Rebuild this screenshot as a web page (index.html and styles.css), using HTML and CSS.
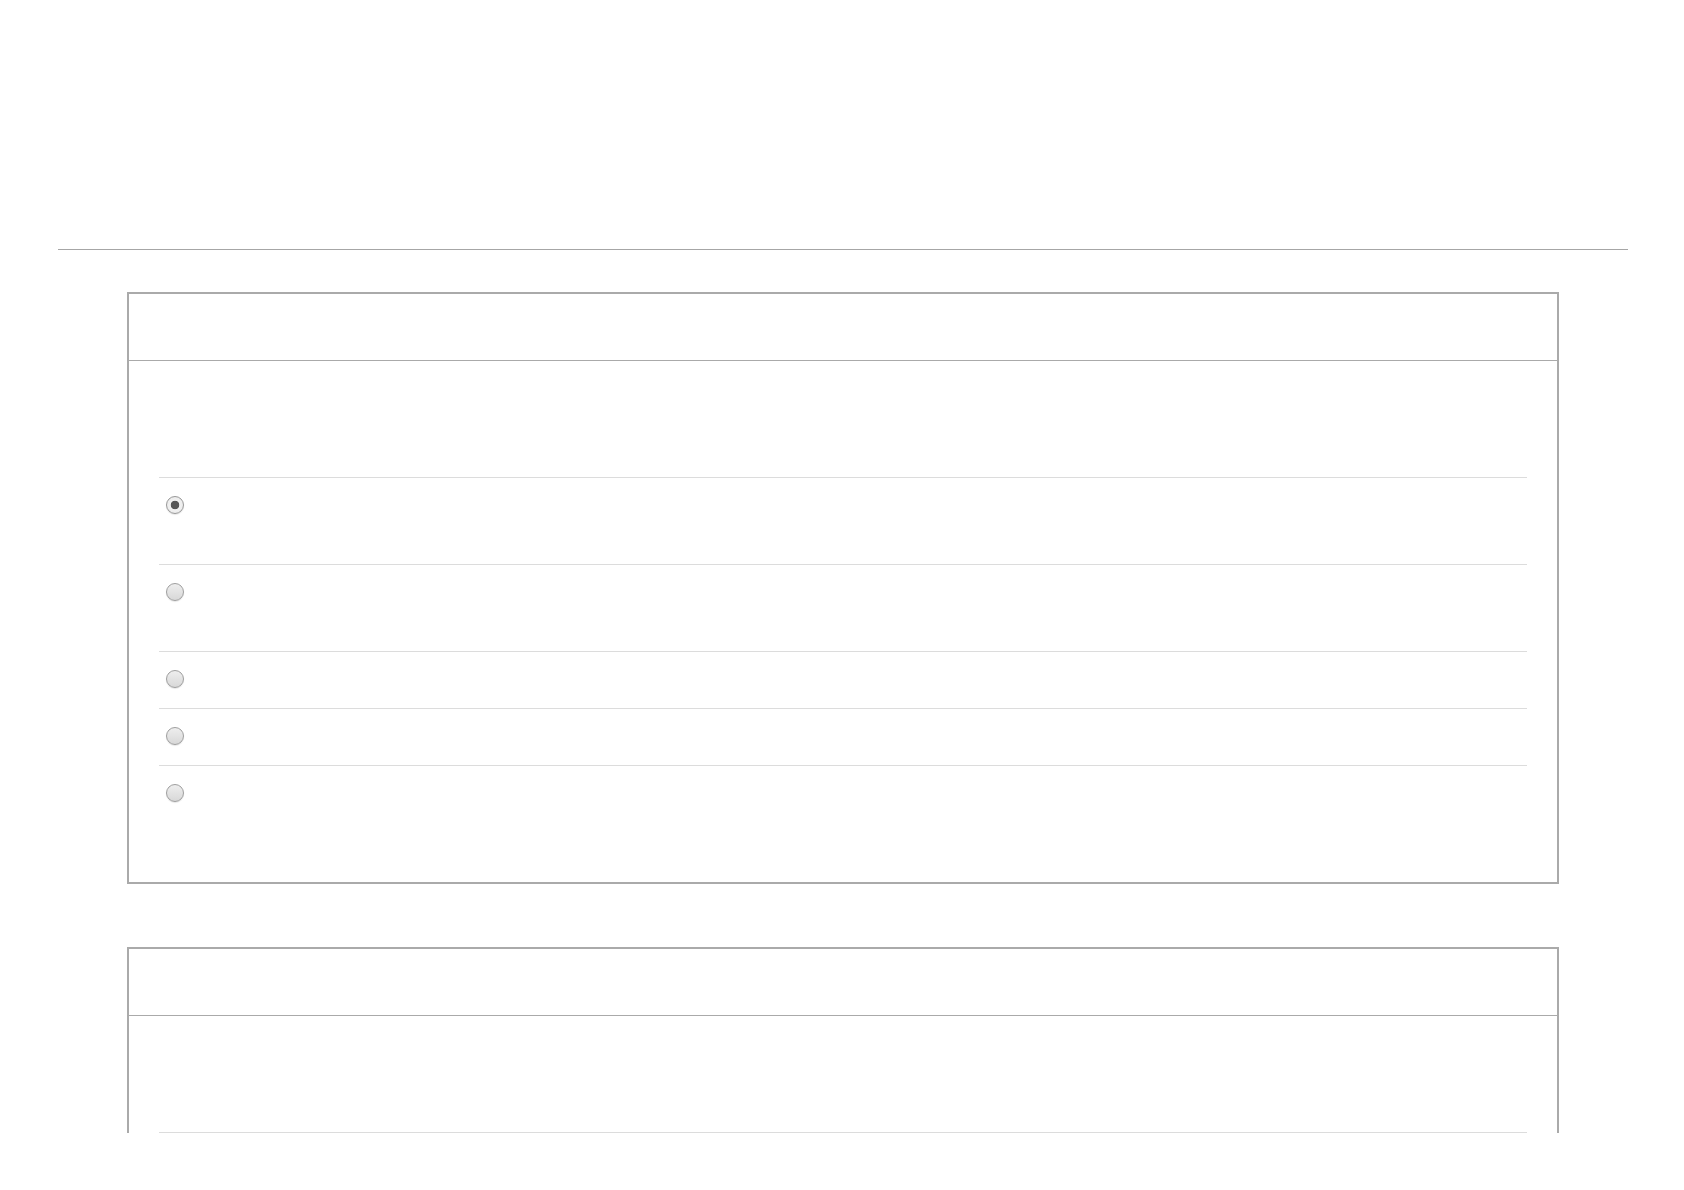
FILE: index.html
```html
<!DOCTYPE html>
<html>
<head>
<meta charset="utf-8">
<link rel="stylesheet" href="styles.css">
</head>
<body>
<div class="page">
  <header class="masthead"></header>
  <hr class="rule">
  <main class="content">
    <section class="panel">
      <div class="panel-head"></div>
      <div class="panel-body">
        <div class="intro"></div>
        <ul class="options">
          <li class="option tall"><input type="radio" name="q1" class="radio" checked></li>
          <li class="option tall"><input type="radio" name="q1" class="radio"></li>
          <li class="option"><input type="radio" name="q1" class="radio"></li>
          <li class="option"><input type="radio" name="q1" class="radio"></li>
          <li class="option"><input type="radio" name="q1" class="radio"></li>
        </ul>
      </div>
    </section>
    <section class="panel">
      <div class="panel-head"></div>
      <div class="panel-body">
        <div class="intro"></div>
        <ul class="options">
          <li class="option tall"><input type="radio" name="q2" class="radio"></li>
          <li class="option tall"><input type="radio" name="q2" class="radio"></li>
        </ul>
      </div>
    </section>
  </main>
</div>
</body>
</html>
```
FILE: styles.css
```css
html, body {
  margin: 0;
  padding: 0;
  background: #fff;
  font-family: "Liberation Sans", Arial, sans-serif;
}

.page {
  height: 1133px;
  overflow: hidden;
  padding: 0 56px 0 58px;
}

.masthead {
  height: 249px;
}

.rule {
  margin: 0;
  border: 0;
  border-top: 1px solid #a6a6a6;
  height: 0;
}

.content {
  padding: 42px 69px 0 69px;
  display: flex;
  flex-direction: column;
  gap: 63px;
}

.panel {
  border: 2px solid #aaa;
  background: #fff;
}

.panel-head {
  height: 66px;
  border-bottom: 1px solid #aaa;
}

.panel-body {
  padding: 0 30px 60px 30px;
}

.intro {
  height: 116px;
}

.options {
  list-style: none;
  margin: 0;
  padding: 0;
}

.option {
  border-top: 1px solid #dcdcdc;
  height: 56px;
  padding-left: 7px;
  display: flex;
  align-items: flex-start;
}

.option.tall {
  height: 86px;
}

.radio {
  appearance: none;
  -webkit-appearance: none;
  margin: 18px 0 0 0;
  width: 18px;
  height: 18px;
  border-radius: 50%;
  border: 1px solid #9e9e9e;
  background: linear-gradient(#eeeeee, #d8d8d8);
  box-shadow: 0 1px 1px rgba(0, 0, 0, 0.1);
  box-sizing: border-box;
  position: relative;
}

.radio:checked {
  background: radial-gradient(circle, #585858 0, #585858 4px, #f2f2f2 4.6px, #e6e6e6 100%);
  border-color: #989898;
}
```
